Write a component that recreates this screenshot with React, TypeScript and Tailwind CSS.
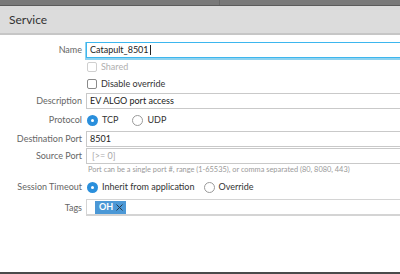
import React from "react";

const font = { fontFamily: "Lato, 'Open Sans', sans-serif" };

function Label({ children }: { children: React.ReactNode }) {
  return (
    <div className="w-[84px] shrink-0 pr-[2px] text-right text-[9px] text-[#666]">
      {children}
    </div>
  );
}

function Radio({ checked }: { checked?: boolean }) {
  return checked ? (
    <span className="flex h-[11px] w-[11px] items-center justify-center rounded-full bg-[#2a8fdc]">
      <span className="h-[3px] w-[3px] rounded-full bg-white" />
    </span>
  ) : (
    <span className="h-[11px] w-[11px] rounded-full border border-[#9a9a9a] bg-white" />
  );
}

function Checkbox({ disabled }: { disabled?: boolean }) {
  return (
    <span
      className={`h-[10px] w-[10px] rounded-[2px] border bg-white ${
        disabled ? "border-[#cfcfcf]" : "border-[#8a8a8a]"
      }`}
    />
  );
}

export default function App() {
  return (
    <div className="flex h-[274px] w-[400px] flex-col overflow-hidden bg-white" style={font}>
      {/* window chrome above the dialog */}
      <div className="flex h-[6px] shrink-0 border-b border-[#5c5c5c] bg-[#7a7a7a]">
        <div className="w-[220px] border-r border-[#6a6a6a]" />
      </div>

      {/* Header */}
      <div className="flex h-[29px] shrink-0 items-center border-b-2 border-[#c6c6c6] bg-[#dcdcdc] pl-[9px] text-[12px] text-[#333]">
        Service
      </div>

      <div className="flex flex-1 flex-col">
        {/* Name */}
        <div className="mt-[7px] flex h-[16px] items-center">
          <Label>Name</Label>
          <div className="ml-[2px] flex h-[16px] w-[330px] shrink-0 items-center border border-[#3db6ee] pl-[3px] text-[9px] text-[#222] shadow-[0_1px_0_1px_#8fd3f0]">
            Catapult_8501<span className="ml-[1px] h-[10px] w-px bg-[#222]" />
          </div>
        </div>

        {/* Shared */}
        <div className="flex h-[18px] items-center">
          <div className="w-[84px] shrink-0" />
          <div className="ml-[3px] flex items-center gap-[4px] text-[9px] text-[#b0b0b0]">
            <Checkbox disabled />
            Shared
          </div>
        </div>

        {/* Disable override */}
        <div className="flex h-[15px] items-center">
          <div className="w-[84px] shrink-0" />
          <div className="ml-[3px] flex items-center gap-[4px] text-[9px] text-[#333]">
            <Checkbox />
            Disable override
          </div>
        </div>

        {/* Description */}
        <div className="mt-[2px] flex h-[16px] items-center">
          <Label>Description</Label>
          <div className="ml-[2px] flex h-[16px] w-[330px] shrink-0 items-center border border-[#c9c9c9] pl-[3px] text-[9px] text-[#222]">
            EV ALGO port access
          </div>
        </div>

        {/* Protocol */}
        <div className="flex h-[22px] items-center">
          <Label>Protocol</Label>
          <div className="ml-[3px] flex items-center text-[9px] text-[#333]">
            <Radio checked />
            <span className="ml-[4px] mr-[14px]">TCP</span>
            <Radio />
            <span className="ml-[4px]">UDP</span>
          </div>
        </div>

        {/* Destination Port */}
        <div className="flex h-[16px] items-center">
          <Label>Destination Port</Label>
          <div className="ml-[2px] flex h-[16px] w-[330px] shrink-0 items-center border border-[#c9c9c9] pl-[3px] text-[9px] text-[#222]">
            8501
          </div>
        </div>

        {/* Source Port */}
        <div className="mt-px flex h-[16px] items-center">
          <Label>Source Port</Label>
          <div className="ml-[2px] flex h-[16px] w-[330px] shrink-0 items-center border border-[#c9c9c9] pl-[5px] text-[9px] text-[#a8a8a8]">
            [&gt;= 0]
          </div>
        </div>

        {/* help */}
        <div className="flex h-[11px] items-center">
          <div className="w-[84px] shrink-0" />
          <div className="ml-[4px] whitespace-nowrap text-[7.4px] text-[#9a9a9a]">
            Port can be a single port #, range (1-65535), or comma separated (80, 8080, 443)
          </div>
        </div>

        {/* Session Timeout */}
        <div className="flex h-[24px] items-center">
          <Label>Session Timeout</Label>
          <div className="ml-[3px] flex items-center text-[9px] text-[#333]">
            <Radio checked />
            <span className="ml-[4px] mr-[9px]">Inherit from application</span>
            <Radio />
            <span className="ml-[4px]">Override</span>
          </div>
        </div>

        {/* Tags */}
        <div className="flex h-[17px] items-center">
          <Label>Tags</Label>
          <div className="ml-[2px] flex h-[17px] w-[330px] shrink-0 items-center border border-b-2 border-[#d4d4d4] pl-[8px]">
            <span className="flex h-[13px] items-center gap-[3px] bg-[#4b98d6] pl-[4px] pr-[3px] text-[9px] font-bold text-white">
              OH
              <svg width="7" height="7" viewBox="0 0 7 7" fill="none" stroke="#2a3b4c" strokeWidth="1">
                <line x1="0.5" y1="0.5" x2="6.5" y2="6.5" />
                <line x1="6.5" y1="0.5" x2="0.5" y2="6.5" />
              </svg>
            </span>
          </div>
        </div>
      </div>

      <div className="h-[2px] shrink-0 bg-[#4a4a4a]" />
    </div>
  );
}
